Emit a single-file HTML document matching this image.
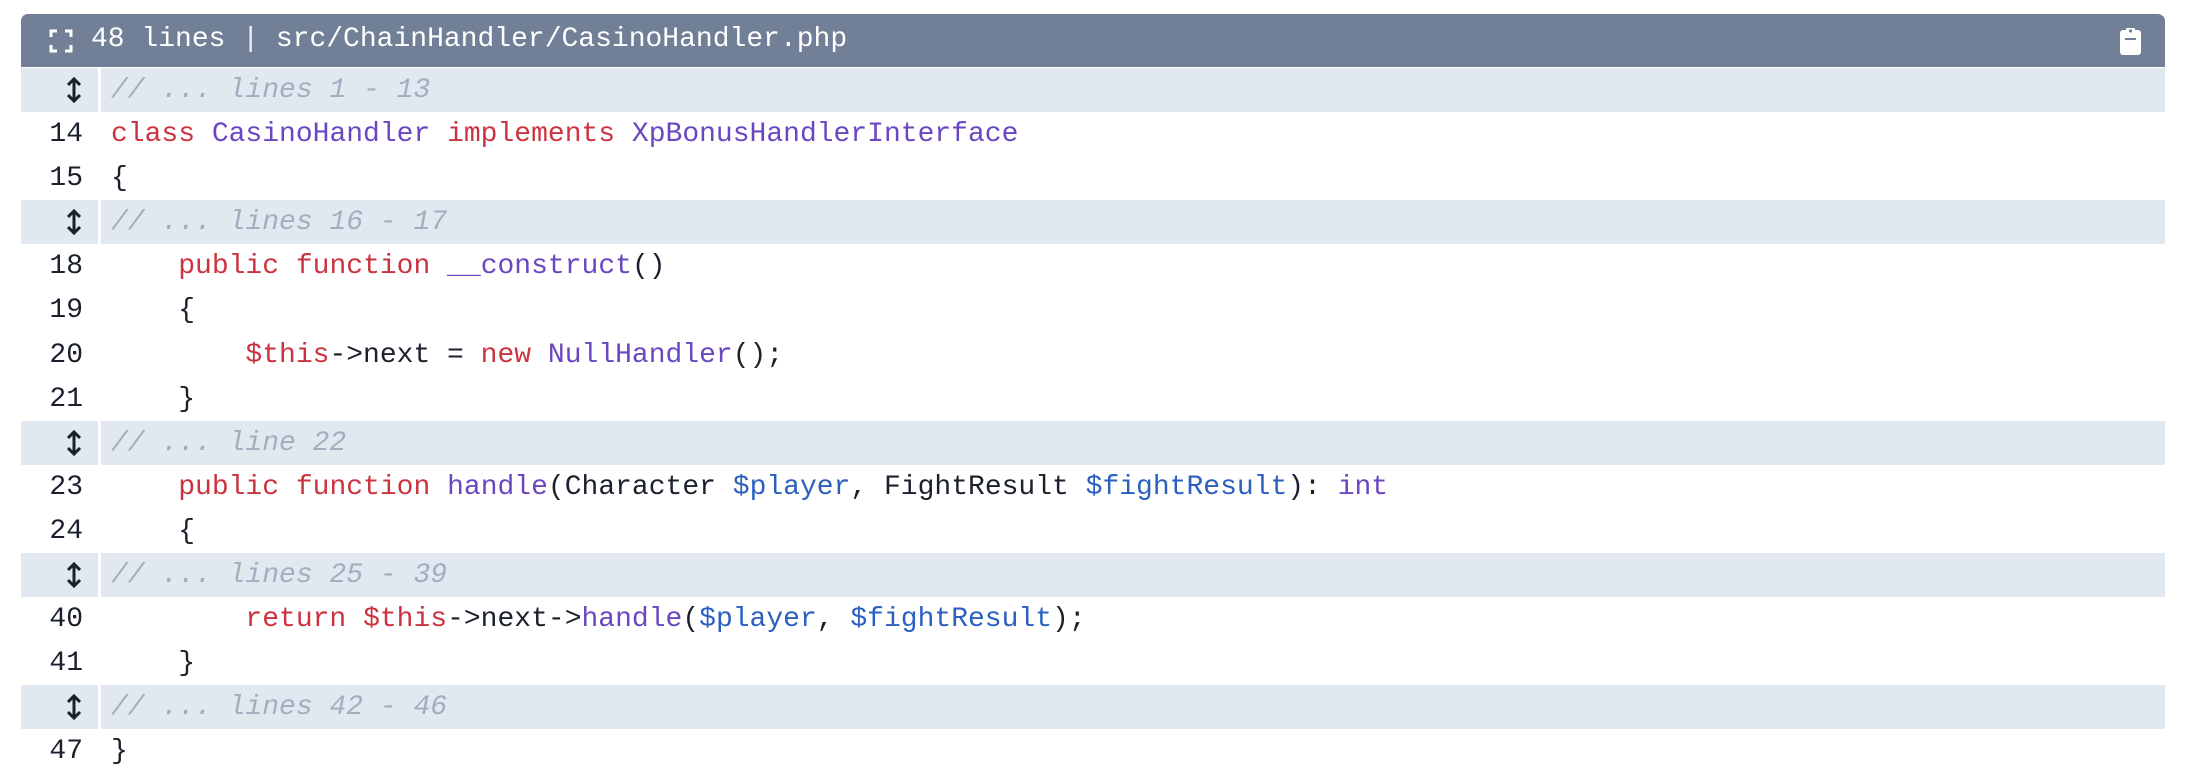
<!DOCTYPE html>
<html><head><meta charset="utf-8"><style>
html,body{margin:0;padding:0;background:#fff;width:2204px;height:784px;overflow:hidden}
.box{position:absolute;left:21px;top:14px;width:2144px;}
.hdr{height:53px;background:#718096;border-radius:7px 7px 0 0;color:#fff;font:28px "Liberation Mono",monospace;position:relative;margin-bottom:1px}
.hdr .t{position:absolute;left:70px;top:10px;white-space:pre}
.row{height:44.1px;line-height:46px;font:28px/46px "Liberation Mono",monospace;color:#1a202c;white-space:pre;position:relative}
.row .n{position:absolute;left:0;width:62px;text-align:right}
.row .c{position:absolute;left:90px}
.col{background:#e2e8f0}
.col .g{position:absolute;left:77px;top:0;width:3px;height:100%;background:#fff}
.col .c{color:#a0aec0;font-style:italic}
.col svg{position:absolute;left:46px;top:8px}
.k{color:#cb3340}.p{color:#6b46c1}.b{color:#2b5fc0}
</style></head><body>
<div class="box">
<div class="hdr">
<svg style="position:absolute;left:28px;top:15px" width="24" height="24" viewBox="0 0 24 24" fill="none" stroke="#fff" stroke-width="3"><path d="M2 8V2h6M16 2h6v6M22 16v6h-6M8 22H2v-6"/></svg>
<div class="t">48 lines<span style="opacity:.9"> | </span>src/ChainHandler/CasinoHandler.php</div>
<svg style="position:absolute;left:2099px;top:12px" width="21" height="29" viewBox="0 0 21 29"><rect x="0" y="4" width="21" height="25" rx="3" fill="#fff"/><rect x="6" y="2" width="9" height="6" rx="1" fill="#fff"/><circle cx="10.5" cy="5" r="1.6" fill="#718096"/><rect x="5" y="12" width="11" height="2" fill="#718096"/></svg>
</div>
<div class="row col"><svg width="14" height="28" viewBox="0 0 14 28"><path d="M7 3v22M1 9l6-6 6 6M1 19l6 6 6-6" fill="none" stroke="#1a202c" stroke-width="3"/></svg><span class="g"></span><span class="c">// ... lines 1 - 13</span></div>
<div class="row"><span class="n">14</span><span class="c"><span class="k">class</span> <span class="p">CasinoHandler</span> <span class="k">implements</span> <span class="p">XpBonusHandlerInterface</span></span></div>
<div class="row"><span class="n">15</span><span class="c">{</span></div>
<div class="row col"><svg width="14" height="28" viewBox="0 0 14 28"><path d="M7 3v22M1 9l6-6 6 6M1 19l6 6 6-6" fill="none" stroke="#1a202c" stroke-width="3"/></svg><span class="g"></span><span class="c">// ... lines 16 - 17</span></div>
<div class="row"><span class="n">18</span><span class="c">    <span class="k">public</span> <span class="k">function</span> <span class="p">__construct</span>()</span></div>
<div class="row"><span class="n">19</span><span class="c">    {</span></div>
<div class="row"><span class="n">20</span><span class="c">        <span class="k">$this</span>-&gt;next = <span class="k">new</span> <span class="p">NullHandler</span>();</span></div>
<div class="row"><span class="n">21</span><span class="c">    }</span></div>
<div class="row col"><svg width="14" height="28" viewBox="0 0 14 28"><path d="M7 3v22M1 9l6-6 6 6M1 19l6 6 6-6" fill="none" stroke="#1a202c" stroke-width="3"/></svg><span class="g"></span><span class="c">// ... line 22</span></div>
<div class="row"><span class="n">23</span><span class="c">    <span class="k">public</span> <span class="k">function</span> <span class="p">handle</span>(Character <span class="b">$player</span>, FightResult <span class="b">$fightResult</span>): <span class="p">int</span></span></div>
<div class="row"><span class="n">24</span><span class="c">    {</span></div>
<div class="row col"><svg width="14" height="28" viewBox="0 0 14 28"><path d="M7 3v22M1 9l6-6 6 6M1 19l6 6 6-6" fill="none" stroke="#1a202c" stroke-width="3"/></svg><span class="g"></span><span class="c">// ... lines 25 - 39</span></div>
<div class="row"><span class="n">40</span><span class="c">        <span class="k">return</span> <span class="k">$this</span>-&gt;next-&gt;<span class="p">handle</span>(<span class="b">$player</span>, <span class="b">$fightResult</span>);</span></div>
<div class="row"><span class="n">41</span><span class="c">    }</span></div>
<div class="row col"><svg width="14" height="28" viewBox="0 0 14 28"><path d="M7 3v22M1 9l6-6 6 6M1 19l6 6 6-6" fill="none" stroke="#1a202c" stroke-width="3"/></svg><span class="g"></span><span class="c">// ... lines 42 - 46</span></div>
<div class="row"><span class="n">47</span><span class="c">}</span></div>
</div>
</body></html>
